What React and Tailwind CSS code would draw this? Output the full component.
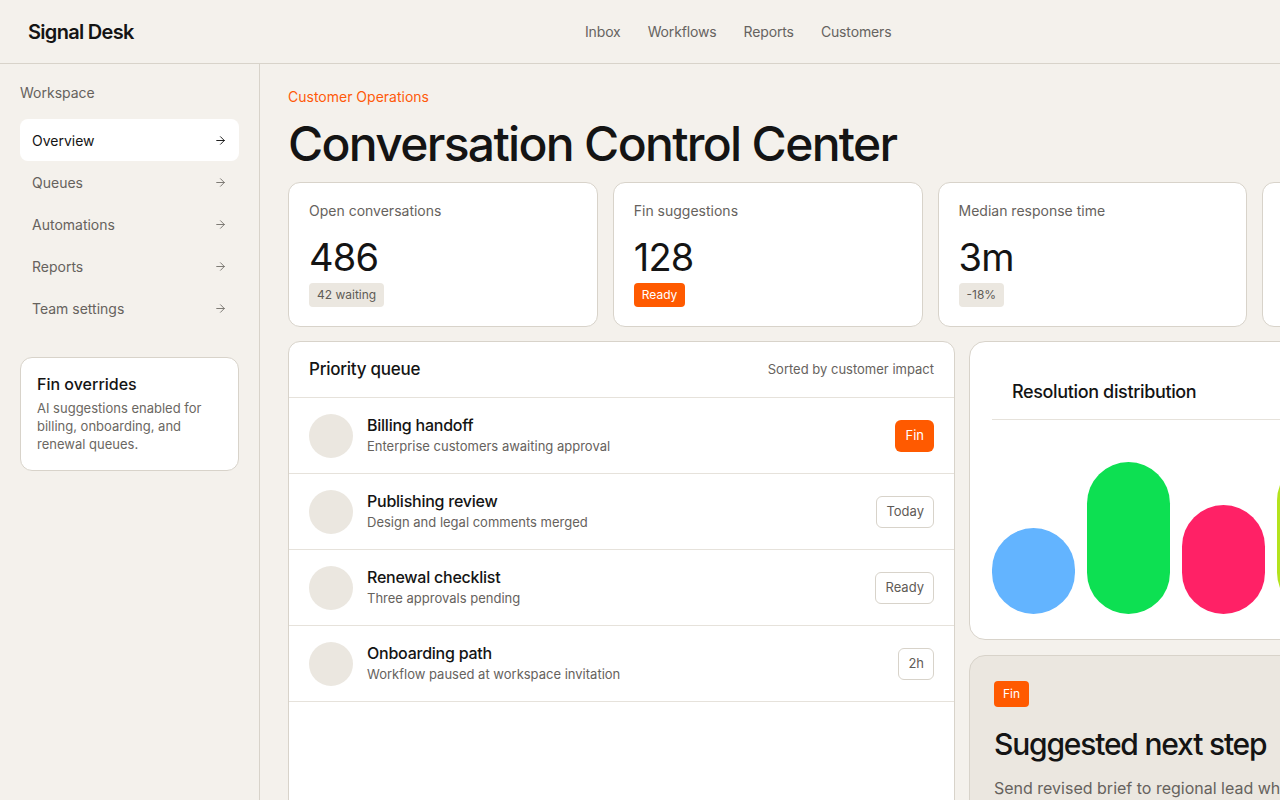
import { ArrowRight } from "lucide-react";

const nav = ["Inbox", "Workflows", "Reports", "Customers"];

const sideLinks = ["Overview", "Queues", "Automations", "Reports", "Team settings"];

const stats = [
  { label: "Open conversations", value: "486", badge: "42 waiting", hot: false },
  { label: "Fin suggestions", value: "128", badge: "Ready", hot: true },
  { label: "Median response time", value: "3m", badge: "-18%", hot: false },
  { label: "CSAT this week", value: "94%", badge: "+3 pts", hot: false },
];

const queue = [
  { title: "Billing handoff", sub: "Enterprise customers awaiting approval", tag: "Fin", hot: true },
  { title: "Publishing review", sub: "Design and legal comments merged", tag: "Today" },
  { title: "Renewal checklist", sub: "Three approvals pending", tag: "Ready" },
  { title: "Onboarding path", sub: "Workflow paused at workspace invitation", tag: "2h" },
];

const bars = [
  { h: 86, color: "bg-[#63b4ff]" },
  { h: 152, color: "bg-[#0de052]" },
  { h: 109, color: "bg-[#ff2166]" },
  { h: 155, color: "bg-[#b4e31c]" },
  { h: 120, color: "bg-[#ffb020]" },
];

export default function App() {
  return (
    <div
      className="w-[1280px] h-[800px] overflow-hidden bg-[#f4f1ec] text-[#141414]"
      style={{ fontFamily: "Inter, 'Noto Sans', sans-serif" }}
    >
      {/* Header */}
      <header className="h-16 border-b border-[#d8d3ca] flex items-center px-7">
        <div className="text-[20px] font-semibold tracking-[-0.035em] w-[557px]">Signal Desk</div>
        <nav className="flex gap-[27px] text-[14px] tracking-[-0.01em] text-[#666360]">
          {nav.map((n) => (
            <span key={n}>{n}</span>
          ))}
        </nav>
      </header>

      <div className="flex h-[736px]">
        {/* Sidebar */}
        <aside className="w-[260px] shrink-0 border-r border-[#d8d3ca] px-5 pt-[19px]">
          <div className="text-[14px] leading-5 text-[#66625d]">Workspace</div>
          <div className="mt-4 flex flex-col">
            {sideLinks.map((l, i) => (
              <div
                key={l}
                className={`h-[42px] px-3 flex items-center justify-between rounded-lg text-[14px] ${
                  i === 0 ? "bg-white text-[#141414]" : "text-[#66625d]"
                }`}
              >
                <span>{l}</span>
                <ArrowRight size={13} strokeWidth={1.75} className={i === 0 ? "text-[#141414]" : "text-[#77736e]"} />
              </div>
            ))}
          </div>

          <div className="mt-7 bg-white border border-[#d8d3ca] rounded-xl px-4 pt-[14px] pb-[17px]">
            <div className="text-[16px] font-medium leading-6">Fin overrides</div>
            <p className="mt-[3px] text-[13px] leading-[18px] text-[#6b6762]">
              AI suggestions enabled for billing, onboarding, and renewal queues.
            </p>
          </div>
        </aside>

        {/* Main */}
        <main className="flex-1 min-w-0 pl-7 pt-[23px]">
          <div className="w-[1284px]">
            <div className="text-[14px] leading-5 text-[#ff5a0a]">Customer Operations</div>
            <h1 className="mt-[11px] text-[48px] leading-[52px] font-medium tracking-[-0.035em]">
              Conversation Control Center
            </h1>

            {/* Stats */}
            <div className="mt-[12px] grid grid-cols-4 gap-[15px]">
              {stats.map((s) => (
                <div
                  key={s.label}
                  className="h-[145px] bg-white border border-[#d8d3ca] rounded-xl px-5 pt-[18px]"
                >
                  <div className="text-[14px] leading-5 text-[#66625d]">{s.label}</div>
                  <div className="mt-[14px] text-[38px] leading-[44px] tracking-[-0.02em]">{s.value}</div>
                  <span
                    className={`mt-[4px] inline-flex h-6 items-center px-2 rounded text-[12px] ${
                      s.hot ? "bg-[#ff5a00] text-white" : "bg-[#ebe7e0] text-[#5f5b56]"
                    }`}
                  >
                    {s.badge}
                  </span>
                </div>
              ))}
            </div>

            {/* Lower */}
            <div className="mt-[14px] flex gap-[14px]">
              <div className="w-[667px] h-[480px] bg-white border border-[#d8d3ca] rounded-xl">
                <div className="h-[56px] px-5 flex items-center justify-between border-b border-[#e6e2db]">
                  <div className="text-[17px] font-medium tracking-[-0.015em]">Priority queue</div>
                  <div className="text-[13px] text-[#66625d]">Sorted by customer impact</div>
                </div>
                {queue.map((q) => (
                  <div
                    key={q.title}
                    className="h-[76px] px-5 flex items-center gap-[14px] border-b border-[#e6e2db]"
                  >
                    <div className="w-11 h-11 rounded-full bg-[#ebe7e0] shrink-0" />
                    <div className="flex-1 min-w-0">
                      <div className="text-[16px] leading-[21px] font-medium tracking-[-0.015em]">{q.title}</div>
                      <div className="text-[13px] leading-[20px] text-[#66625d]">{q.sub}</div>
                    </div>
                    <span
                      className={`h-8 px-[9px] inline-flex items-center rounded-md text-[13px] ${
                        q.hot
                          ? "bg-[#ff5a00] text-white px-[10px]"
                          : "bg-white border border-[#d8d3ca] text-[#5f5b56]"
                      }`}
                    >
                      {q.tag}
                    </span>
                  </div>
                ))}
              </div>

              <div className="flex-1 flex flex-col gap-[15px]">
                <div className="h-[299px] bg-white border border-[#d8d3ca] rounded-2xl px-[22px] pt-[38px] pb-[25px] flex flex-col">
                  <div className="px-5 pb-[15px] border-b border-[#e6e2db] text-[18px] leading-6 font-medium tracking-[-0.02em]">
                    Resolution distribution
                  </div>
                  <div className="flex-1 flex items-end gap-3">
                    {bars.map((b, i) => (
                      <div
                        key={i}
                        className={`w-[83px] rounded-full ${b.color}`}
                        style={{ height: b.h }}
                      />
                    ))}
                  </div>
                </div>

                <div className="h-[200px] bg-[#ebe7e0] border border-[#d8d3ca] rounded-2xl px-6 pt-6">
                  <span className="inline-flex h-[26px] items-center px-[9px] rounded bg-[#ff5a00] text-white text-[12px]">
                    Fin
                  </span>
                  <div className="mt-[17px] text-[30px] leading-[40px] font-medium tracking-[-0.04em] whitespace-nowrap">
                    Suggested next step
                  </div>
                  <p className="mt-[12px] text-[16px] leading-6 text-[#66625d] whitespace-nowrap">
                    Send revised brief to regional lead while Fin drafts the follow-up.
                  </p>
                </div>
              </div>
            </div>
          </div>
        </main>
      </div>
    </div>
  );
}
